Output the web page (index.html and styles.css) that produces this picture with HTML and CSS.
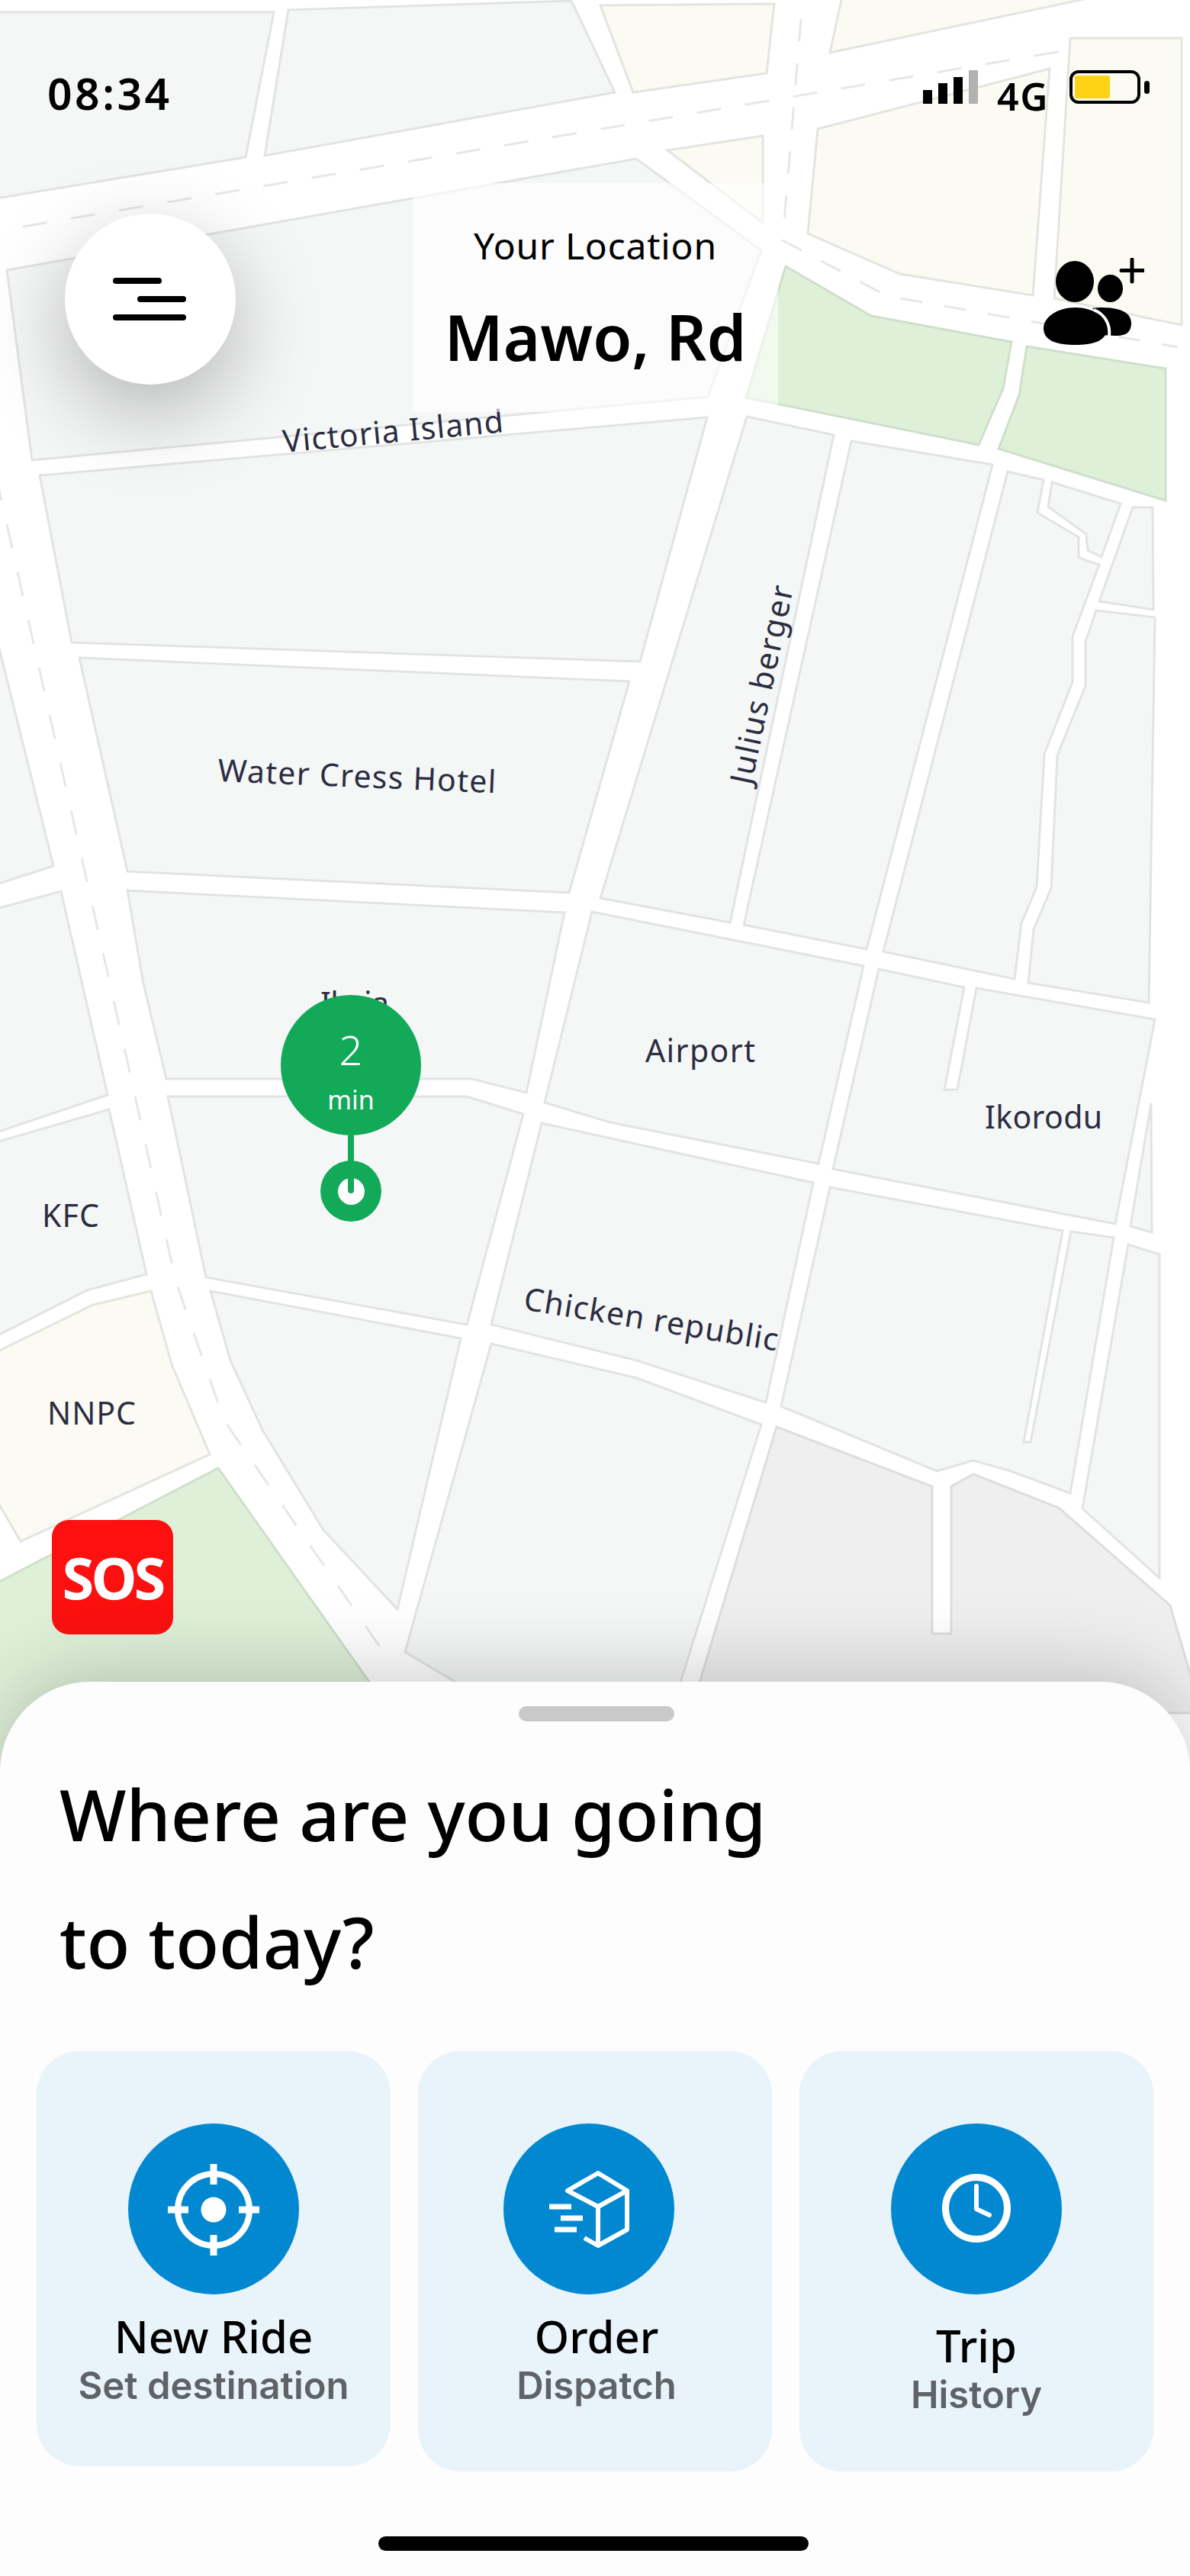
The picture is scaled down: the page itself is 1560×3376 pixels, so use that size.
FILE: index.html
```html
<!DOCTYPE html>
<html lang="en">
<head>
  <meta charset="UTF-8">
  <title>Ride home</title>
  <link rel="stylesheet" href="styles.css">
</head>
<body>
<div class="screen">
  <div class="top">
    <svg class="map" viewBox="0 0 1560 2340" width="1560" height="2340">
      <!-- plain grey blocks -->
      <g class="blk">
        <polygon points="-5,16 359,16 322,206 -5,260"/>
        <polygon points="378,13 749,1 806,121 347,204"/>
        <polygon points="9,354 834,208 998,328 928,520 42,603"/>
        <polygon points="52,623 927,547 839,867 94,842"/>
        <polygon points="104,862 825,893 746,1170 167,1142"/>
        <polygon points="167,1167 740,1196 690,1432 619,1414 218,1414 188,1289"/>
        <polygon points="220,1437 612,1437 686,1460 612,1736 270,1674"/>
        <polygon points="276,1692 604,1754 521,2109 424,2005 344,1874 302,1783"/>
        <polygon points="644,1761 835,1806 998,1867 884,2230 640,2230 531,2165"/>
        <polygon points="776,1195 1132,1266 1073,1525 800,1471 714,1445"/>
        <polygon points="710,1472 1066,1550 1004,1838 835,1783 644,1736"/>
        <polygon points="1088,1556 1393,1613 1342,1890 1351,1890 1404,1614 1460,1622 1403,1957 1325,1928 1276,1914 1228,1928 1024,1843"/>
        <polygon points="1479,1631 1520,1644 1520,2068 1419,1977"/>
        <polygon points="1509,1446 1510,1615 1482,1607"/>
        <polygon points="1152,1270 1264,1294 1238,1428 1255,1428 1280,1295 1514,1336 1462,1604 1092,1532"/>
        <polygon points="979,546 1093,570 957,1209 787,1177"/>
        <polygon points="1116,578 1301,609 1136,1244 975,1212"/>
        <polygon points="1321,618 1368,629 1360,672 1414,704 1414,731 1441,740 1406,834 1406,894 1369,988 1359,1162 1339,1210 1330,1283 1158,1247"/>
        <polygon points="1379,632 1469,660 1444,730 1426,721 1424,700 1374,664"/>
        <polygon points="1485,665 1511,665 1512,799 1441,788"/>
        <polygon points="1437,800 1514,809 1506,1314 1348,1288 1355,1218 1378,1164 1386,990 1423,899 1423,841"/>
        <polygon points="-5,834 70,1135 -5,1159"/>
        <polygon points="80,1168 141,1435 -5,1484 -5,1191"/>
        <polygon points="143,1454 192,1670 114,1691 -5,1751 -5,1497"/>
      </g>
      <!-- built up blocks -->
      <g class="blk-cream">
        <polygon points="787,7 1015,5 1005,96 830,121"/>
        <polygon points="1104,-5 1440,-5 1088,69"/>
        <polygon points="875,197 1000,178 1000,292"/>
        <polygon points="1072,169 1376,90 1354,387 1180,359 1059,306"/>
        <polygon points="1403,50 1549,50 1549,426 1382,391"/>
        <polygon points="198,1692 122,1710 -5,1772 -5,1965 27,2020 275,1906 225,1788"/>
      </g>
      <!-- parks -->
      <g class="blk-green">
        <polygon points="1030,349 1142,414 1326,448 1315,509 1283,583 978,521"/>
        <polygon points="1346,454 1528,483 1528,656 1309,588 1336,518"/>
        <polygon points="286,1924 -5,2075 -5,2340 580,2340"/>
      </g>
      <g class="blk-dark">
        <polygon points="1018,1870 1222,1948 1222,2141 1247,2141 1247,1948 1276,1932 1388,1976 1534,2104 1575,2245 905,2245"/>
      </g>
      <!-- lane markings -->
      <polyline class="lane" points="30,297 1387,68"/>
      <polyline class="lane lane-b" points="1050,25 1026,315 1163,388 1544,455"/>
      <polyline class="lane" points="-5,625 169,1400 224,1650 231,1681 293,1859 301,1872 515,2183"/>
      <!-- place names -->
      <g class="place">
        <text x="372" y="593" textLength="290" transform="rotate(-5.3 372 593)">Victoria Island</text>
        <text x="285" y="1024" textLength="365" transform="rotate(2.4 285 1024)">Water Cress Hotel</text>
        <text x="985" y="1030" textLength="265" transform="rotate(-78 985 1030)">Julius berger</text>
        <text x="420" y="1330" textLength="90">Ikeja</text>
        <text x="846" y="1392" textLength="144">Airport</text>
        <text x="1291" y="1479" textLength="154">Ikorodu</text>
        <text x="55" y="1608" textLength="75">KFC</text>
        <text x="62" y="1867" textLength="116">NNPC</text>
        <text x="685" y="1716" textLength="337" transform="rotate(9.3 685 1716)">Chicken republic</text>
      </g>
    </svg>

    <div class="pin">
      <div class="pin-bubble">
        <span class="pin-num">2</span>
        <span class="pin-unit">min</span>
      </div>
      <div class="pin-stem"></div>
      <div class="pin-foot"><i></i></div>
    </div>

    <div class="status">
      <span class="time">08:34</span>
      <div class="signal"><i></i><i></i><i></i><i></i></div>
      <span class="net">4G</span>
      <div class="battery"><i></i></div>
      <div class="battery-tip"></div>
    </div>

    <div class="header">
      <button class="menu" type="button" aria-label="Menu">
        <i class="m1"></i><i class="m2"></i><i class="m3"></i>
      </button>
      <div class="where">
        <div class="where-label">Your Location</div>
        <div class="where-name">Mawo, Rd</div>
      </div>
      <svg class="people" viewBox="0 0 132 120" width="132" height="120">
        <ellipse cx="41" cy="31" rx="25" ry="27"/>
        <path d="M74 65c9 0 41 0 41 20 0 15-10 17-21 17l-20-1c2-9 3-24-10-35z"/>
        <ellipse cx="87.500" cy="40" rx="16.500" ry="18"/>
        <path d="M41.500 65c24 0 41.500 13 41.500 27 0 18-20 22-41.500 22S0 110 0 92c0-14 18-27 41.500-27z"/>
        <path d="M66 68c15 6 22 20 20 35" class="people-gap"/>
        <path d="M116 2v29M102 16.500h29" class="people-plus"/>
      </svg>
    </div>

    <div class="sos">SOS</div>
  </div>

  <div class="sheet">
    <div class="handle"></div>
    <h1 class="title">Where are you going<br>to today?</h1>
    <div class="cards">
      <div class="card">
        <div class="card-icon">
          <svg viewBox="0 0 224 224" width="224" height="224">
            <circle cx="112" cy="113" r="47" class="ic"/>
            <circle cx="112" cy="113" r="16.500" class="ic-fill"/>
            <path d="M112 53v27M112 146v27M52 113h27M145 113h27" class="ic ic-tick"/>
          </svg>
        </div>
        <div class="card-title">New Ride</div>
        <div class="card-sub">Set destination</div>
      </div>
      <div class="card card-mid">
        <div class="card-icon">
          <svg viewBox="0 0 224 224" width="224" height="224">
            <path d="M124 65l38 23-38 21-40-21zM162 88v51l-38 21-18-10M124 109v51" class="ic ic-box"/>
            <path d="M60 109h29M75 124h29M67 139h29" class="ic ic-bars"/>
          </svg>
        </div>
        <div class="card-title">Order</div>
        <div class="card-sub">Dispatch</div>
      </div>
      <div class="card card-last">
        <div class="card-icon">
          <svg viewBox="0 0 224 224" width="224" height="224">
            <circle cx="112" cy="111" r="40.500" class="ic ic-clock"/>
            <path d="M112 82v30l17 8" class="ic ic-hand"/>
          </svg>
        </div>
        <div class="card-title">Trip</div>
        <div class="card-sub">History</div>
      </div>
    </div>
    <div class="home-bar"></div>
  </div>
</div>
</body>
</html>
```

FILE: styles.css
```css
:root {
  --blue: #0288d1;
  --green: #12aa59;
  --ink: #2b2d42;
  --sans: 'Noto Sans', 'Open Sans', sans-serif;
}
html, body {
  margin: 0;
  padding: 0;
  background: #fff;
}
.screen {
  width: 1560px;
  height: 3376px;
  position: relative;
  overflow: hidden;
  font-family: var(--sans);
  color: #000;
  display: flex;
  flex-direction: column;
}
.top {
  height: 2204px;
  position: relative;
  display: flex;
  flex-direction: column;
}

/* map */
.map {
  position: absolute;
  left: 0;
  top: 0;
}
.blk polygon, .blk-cream polygon, .blk-green polygon, .blk-dark polygon {
  stroke-width: 3;
  stroke-linejoin: miter;
}
.blk { fill: #f5f7f6; stroke: #e2e4e4; }
.blk-cream { fill: #fbfbf3; stroke: #e4e5e0; }
.blk-green { fill: #dff0d8; stroke: #cfdfcb; }
.blk-dark { fill: #efefef; stroke: #dedede; }
.lane {
  fill: none;
  stroke: #e6e7e7;
  stroke-width: 3;
  stroke-dasharray: 32 32;
}
.lane-b { stroke-dasharray: 29 29; }
.place {
  font-family: var(--sans);
  font-size: 41px;
  font-weight: 400;
  fill: var(--ink);
}

/* green eta pin */
.pin {
  position: absolute;
  left: 368px;
  top: 1304px;
  width: 184px;
  display: flex;
  flex-direction: column;
  align-items: center;
}
.pin-bubble {
  width: 184px;
  height: 184px;
  border-radius: 50%;
  background: var(--green);
  color: #fff;
  display: flex;
  flex-direction: column;
  align-items: center;
}
.pin-num {
  font-size: 54px;
  font-weight: 300;
  line-height: 52px;
  margin-top: 45px;
}
.pin-unit {
  font-size: 34px;
  font-weight: 400;
  line-height: 32px;
  margin-top: 24px;
}
.pin-stem {
  width: 8px;
  height: 34px;
  background: var(--green);
}
.pin-foot {
  width: 80px;
  height: 80px;
  margin-top: -1px;
  border-radius: 50%;
  background: var(--green);
  display: flex;
  align-items: center;
  justify-content: center;
  position: relative;
}
.pin-foot i {
  display: block;
  width: 35px;
  height: 35px;
  border-radius: 50%;
  background: #fff;
}
.pin-foot::after {
  content: "";
  position: absolute;
  left: 36px;
  top: 0;
  width: 8px;
  height: 43px;
  border-radius: 0 0 4px 4px;
  background: var(--green);
}

/* status bar */
.status {
  position: relative;
  height: 240px;
  box-sizing: border-box;
  padding: 92px 53px 0 62px;
  display: flex;
  align-items: flex-start;
}
.time {
  font-size: 57px;
  font-weight: 600;
  line-height: 60px;
  letter-spacing: 3.5px;
  margin-right: auto;
}
.signal {
  display: flex;
  align-items: flex-end;
  gap: 8px;
  height: 44px;
}
.signal i {
  display: block;
  width: 12px;
  background: #000;
}
.signal i:nth-child(1) { height: 18px; }
.signal i:nth-child(2) { height: 27px; }
.signal i:nth-child(3) { height: 35px; }
.signal i:nth-child(4) { height: 44px; background: #b2b2b2; }
.net {
  font-size: 50px;
  font-weight: 600;
  line-height: 60px;
  letter-spacing: 1.5px;
  margin: 4px 27px 0 25px;
}
.battery {
  box-sizing: border-box;
  width: 93px;
  height: 44px;
  padding: 3px;
  border: 4px solid #000;
  border-radius: 12px;
}
.battery i {
  display: block;
  width: 46px;
  height: 100%;
  background: #ffd215;
  border-radius: 3px;
}
.battery-tip {
  width: 7px;
  height: 17px;
  margin: 14px 0 0 5px;
  border-radius: 4px;
  background: #000;
}

/* menu, location, people */
.header {
  position: relative;
  display: flex;
  align-items: flex-start;
  padding-left: 85px;
}
.menu {
  position: relative;
  width: 224px;
  height: 224px;
  margin-top: 40px;
  padding: 0;
  border: 0;
  border-radius: 50%;
  background: #fff;
  box-shadow: 0 36px 110px rgba(0,0,0,0.27);
}
.menu i {
  position: absolute;
  height: 8px;
  border-radius: 4px;
  background: #000;
}
.m1 { left: 63px; top: 84px; width: 64px; }
.m2 { left: 95px; top: 108px; width: 64px; }
.m3 { left: 63px; top: 132px; width: 96px; }
.where {
  width: 479px;
  height: 300px;
  margin-left: 232px;
  background: rgba(255,255,255,0.6);
  text-align: center;
}
.where-label {
  font-size: 48px;
  font-weight: 400;
  line-height: 60px;
  letter-spacing: 0.8px;
  margin-top: 52px;
}
.where-name {
  font-size: 83px;
  font-weight: 600;
  line-height: 100px;
  margin-top: 39px;
}
.people {
  margin: 98px 0 0 348px;
  flex: none;
}
.people-gap {
  fill: none;
  stroke: #fff;
  stroke-width: 4;
}
.people-plus {
  fill: none;
  stroke: #000;
  stroke-width: 5;
  stroke-linecap: round;
}

.sos {
  position: relative;
  width: 159px;
  height: 150px;
  margin: auto 0 62px 68px;
  border-radius: 22px;
  background: #fc1010;
  color: #fff;
  font-size: 76px;
  font-weight: 700;
  line-height: 150px;
  letter-spacing: -4px;
  text-align: center;
}

/* bottom sheet */
.sheet {
  position: relative;
  flex: 1;
  box-sizing: border-box;
  padding-top: 32px;
  background: #fdfdfd;
  border-radius: 118px 118px 0 0;
  box-shadow: 0 -6px 110px rgba(0,0,0,0.22);
}
.handle {
  width: 204px;
  height: 20px;
  margin: 0 0 0 680px;
  border-radius: 10px;
  background: #c9c9c9;
}
.title {
  margin: 38px 0 0 78px;
  font-size: 93px;
  font-weight: 500;
  line-height: 167px;
}
.cards {
  display: grid;
  grid-template-columns: repeat(3, 1fr);
  gap: 36px;
  align-items: start;
  padding: 0 48px;
  margin-top: 60px;
}
.card {
  height: 551px;
  box-sizing: border-box;
  padding-top: 95px;
  border-radius: 56px;
  background: #e8f3fa;
  display: flex;
  flex-direction: column;
  align-items: center;
}
.card:first-child { height: 544px; }
.card-icon {
  width: 224px;
  height: 224px;
  border-radius: 50%;
  background: var(--blue);
  flex: none;
}
.card-icon svg { display: block; }
.card-mid .card-icon { margin-right: 16px; }
.card-mid .card-title, .card-mid .card-sub { margin-left: 4px; }
.ic {
  fill: none;
  stroke: #fff;
  stroke-width: 8;
}
.ic-fill { fill: #fff; }
.ic-tick { stroke-width: 9; }
.ic-box { stroke-width: 6; stroke-linejoin: round; }
.ic-bars { stroke-width: 7; }
.ic-clock { stroke-width: 9; }
.ic-hand { stroke-width: 6; stroke-linecap: round; stroke-linejoin: round; }
.card-title {
  font-size: 58px;
  font-weight: 500;
  line-height: 64px;
  margin-top: 23px;
}
.card-sub {
  font-family: Inter, 'Noto Sans', sans-serif;
  font-size: 49px;
  font-weight: 600;
  line-height: 56px;
  color: #5f6368;
  margin-top: 5px;
}
.card-last .card-title { margin-top: 35px; }
.home-bar {
  position: absolute;
  left: 496px;
  top: 1120px;
  width: 564px;
  height: 19px;
  border-radius: 10px;
  background: #000;
}
```
